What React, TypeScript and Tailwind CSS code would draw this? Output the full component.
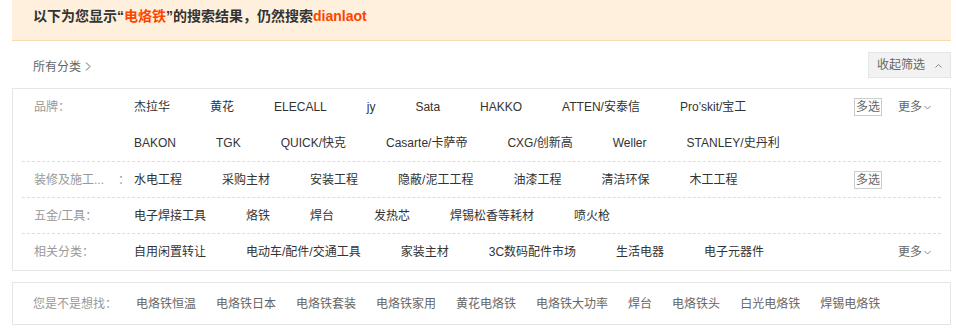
const brands1 = ['杰拉华', '黄花', 'ELECALL', 'jy', 'Sata', 'HAKKO', 'ATTEN/安泰信', 'Pro’skit/宝工']
const brands2 = ['BAKON', 'TGK', 'QUICK/快克', 'Casarte/卡萨帝', 'CXG/创新高', 'Weller', 'STANLEY/史丹利']
const decor = ['水电工程', '采购主材', '安装工程', '隐蔽/泥工工程', '油漆工程', '清洁环保', '木工工程']
const tools = ['电子焊接工具', '烙铁', '焊台', '发热芯', '焊锡松香等耗材', '喷火枪']
const related = ['自用闲置转让', '电动车/配件/交通工具', '家装主材', '3C数码配件市场', '生活电器', '电子元器件']
const guesses = ['电烙铁恒温', '电烙铁日本', '电烙铁套装', '电烙铁家用', '黄花电烙铁', '电烙铁大功率', '焊台', '电烙铁头', '白光电烙铁', '焊锡电烙铁']

function Items({list}: {list: string[]}) {
  return (
    <ul className="flex flex-1 items-center">
      {list.map(t => (
        <li key={t} className="mr-10 whitespace-nowrap text-[#333] cursor-pointer">{t}</li>
      ))}
    </ul>
  )
}

function Chevron({up}: {up?: boolean}) {
  return (
    <svg width="7" height="5" viewBox="0 0 7 5" className="ml-0.5" fill="none">
      <path d={up ? 'M0.5 4.5 L3.5 1.5 L6.5 4.5' : 'M0.5 1 L3.5 4 L6.5 1'} stroke="#888" strokeWidth="1" />
    </svg>
  )
}

function Multi() {
  return <span className="h-[18px] leading-[16px] px-[1px] border border-[#ccc] text-[#666] cursor-pointer">多选</span>
}

function More() {
  return (
    <span className="flex items-center text-[#666] cursor-pointer">更多<Chevron/></span>
  )
}

export default function App() {
  return (
    <div className="w-[956px] h-[331px] bg-white text-[12px] leading-none" style={{fontFamily: '"Liberation Sans", "Noto Sans CJK SC", sans-serif'}}>
      <div className="ml-3 mr-[5px] h-[41px] bg-[#fef0dc] border-b border-[#f9dcae] flex items-center pl-[21px] pb-[8px]">
        <h2 className="text-[14px] font-bold text-[#333]">
          以下为您显示“<span className="text-[#f40]">电烙铁</span>”的搜索结果，仍然搜索<span className="text-[#f40]">dianlaot</span>
        </h2>
      </div>

      <div className="ml-3 mr-[5px] mt-[11px] h-[26px] flex items-center justify-between">
        <a className="ml-[21px] mt-[3px] flex items-center text-[#666] cursor-pointer">
          所有分类
          <svg width="6" height="9" viewBox="0 0 6 9" className="ml-1" fill="none">
            <path d="M1 0.5 L5 4.5 L1 8.5" stroke="#666" strokeWidth="1" />
          </svg>
        </a>
        <button className="h-[26px] w-[83px] bg-[#f2f2f2] border border-[#e5e5e5] text-[#666] flex items-center justify-center gap-2">
          收起筛选<Chevron up/>
        </button>
      </div>

      <div className="ml-3 mr-[5px] mt-[10px] border border-[#e5e5e5]">
        <div className="flex mx-[9px] border-b border-dashed border-[#ddd]">
          <div className="w-[112px] pl-3 pt-[12px] text-[#999]">品牌：</div>
          <div className="flex-1 flex flex-col">
            <div className="h-9 flex items-center">
              <Items list={brands1}/>
              <div className="flex items-center gap-4 mr-[10px]"><Multi/><More/></div>
            </div>
            <div className="h-9 flex items-center"><Items list={brands2}/></div>
          </div>
        </div>

        <div className="flex mx-[9px] h-9 items-center border-b border-dashed border-[#ddd]">
          <div className="w-[112px] pl-3 text-[#999] flex items-center">
            <span className="w-[84px] whitespace-nowrap">装修及施工...</span>
            <span>：</span>
          </div>
          <Items list={decor}/>
          <div className="flex items-center mr-[59px]"><Multi/></div>
        </div>

        <div className="flex mx-[9px] h-9 items-center border-b border-dashed border-[#ddd]">
          <div className="w-[112px] pl-3 text-[#999]">五金/工具：</div>
          <Items list={tools}/>
        </div>

        <div className="flex mx-[9px] h-9 items-center">
          <div className="w-[112px] pl-3 text-[#999]">相关分类：</div>
          <Items list={related}/>
          <div className="mr-[10px]"><More/></div>
        </div>
      </div>

      <div className="ml-3 mr-[5px] mt-[11px] h-[43px] border border-[#e5e5e5] flex items-center pl-[20px]">
        <span className="w-[103px] text-[#999]">您是不是想找：</span>
        <ul className="flex items-center">
          {guesses.map(t => (
            <li key={t} className="mr-5 text-[#666] cursor-pointer">{t}</li>
          ))}
        </ul>
      </div>
    </div>
  )
}
